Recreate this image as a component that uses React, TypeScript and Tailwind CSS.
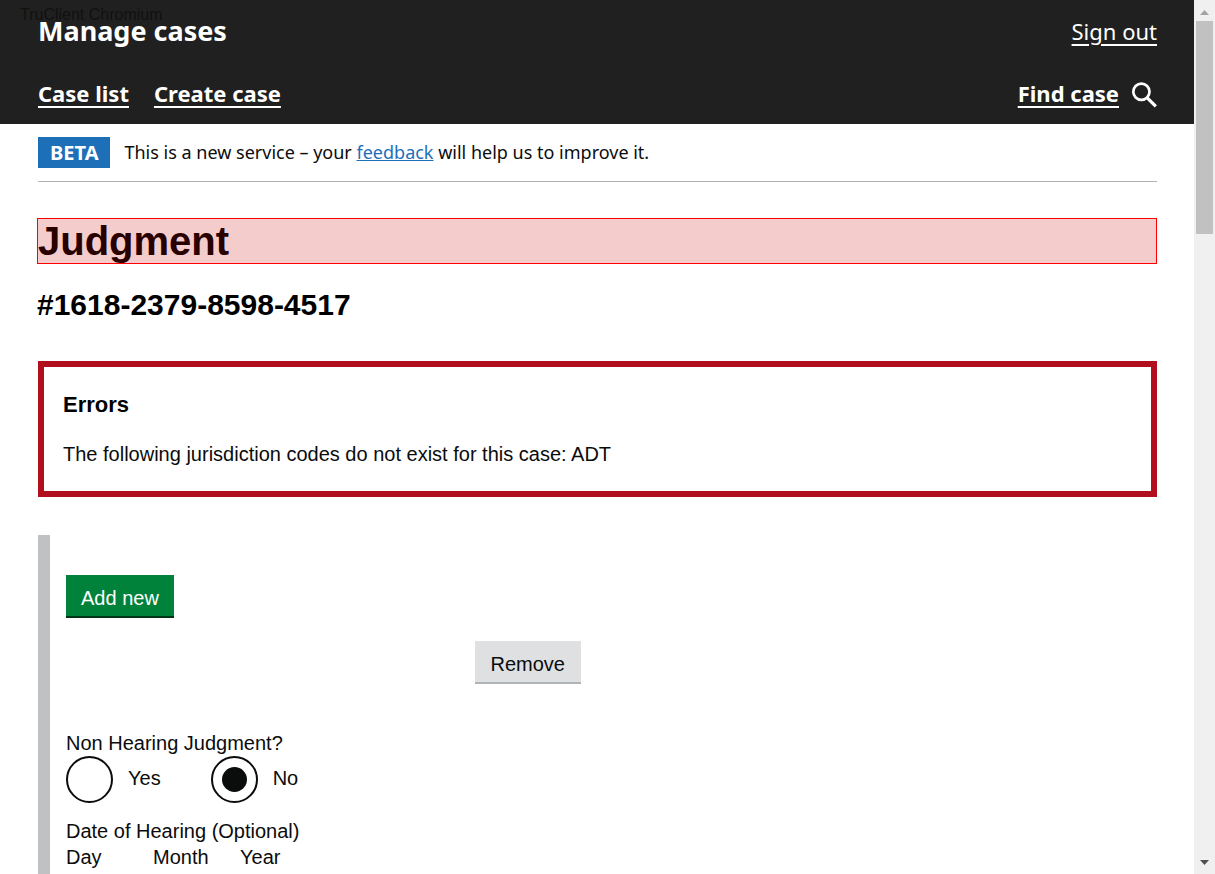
import React from 'react';

function SearchIcon() {
  return (
    <svg viewBox="0 0 26 26" className="h-[26px] w-[26px]" fill="none" stroke="white" strokeWidth="2.7" aria-hidden="true">
      <circle cx="10.4" cy="9.8" r="8.1" />
      <path d="M16 15.6 L24.8 24.4" strokeWidth="3.2" />
    </svg>
  );
}

function Header() {
  return (
    <header className="bg-[#202020] pr-[37px] pl-[38px] font-['Noto_Sans',sans-serif] text-[22px] text-white">
      <div className="flex h-[62px] items-center justify-between">
        <div className="text-[27px] leading-8 font-bold">Manage cases</div>
        <a href="#sign-out" className="underline decoration-2 underline-offset-4">Sign out</a>
      </div>
      <nav className="flex h-[62px] items-start justify-between font-bold">
        <div className="flex gap-[25px] pt-4 leading-[30px]">
          <a href="#cases" className="underline decoration-2 underline-offset-4">Case list</a>
          <a href="#create" className="underline decoration-2 underline-offset-4">Create case</a>
        </div>
        <div className="flex gap-3 pt-4 leading-[30px]">
          <a href="#find" className="underline decoration-2 underline-offset-4">Find case</a>
          <div className="pt-1">
            <SearchIcon />
          </div>
        </div>
      </nav>
    </header>
  );
}

function Radio({ label, checked }: { label: string; checked?: boolean }) {
  return (
    <label className="flex items-center gap-[15px]">
      <input
        type="radio"
        name="nonHearing"
        defaultChecked={checked}
        className="grid h-[47px] w-[47px] appearance-none place-items-center rounded-full border-2 border-[#0b0c0c] before:h-[25px] before:w-[25px] before:rounded-full checked:before:bg-[#0b0c0c]"
      />
      <span className="pb-1">{label}</span>
    </label>
  );
}

function DateField({ label, id, size }: { label: string; id: string; size: string }) {
  return (
    <div className="flex flex-col gap-2">
      <label htmlFor={id}>{label}</label>
      <input id={id} className={`h-12 border-2 border-[#0b0c0c] px-2 ${size}`} />
    </div>
  );
}

function ScrollRail() {
  return (
    <div className="flex w-[21px] shrink-0 flex-col items-center bg-[#f0f0f0]" aria-hidden="true">
      <div className="flex h-[21px] shrink-0 items-center justify-center pt-1">
        <svg viewBox="0 0 9 5" className="h-[5px] w-[9px]" fill="#a3a3a3"><path d="M4.5 0 L9 5 H0 Z" /></svg>
      </div>
      <div className="h-[213px] w-[17px] bg-[#c1c1c1]" />
      <div className="mt-auto flex h-6 shrink-0 items-center justify-center">
        <svg viewBox="0 0 9 5" className="h-[5px] w-[9px]" fill="#505050"><path d="M4.5 5 L9 0 H0 Z" /></svg>
      </div>
    </div>
  );
}

export default function App() {
  return (
    <div className="relative flex h-screen overflow-hidden bg-white font-['Liberation_Sans',Arial,sans-serif] text-xl leading-[26px] text-[#0b0c0c]">
      <div className="absolute top-1 left-5 text-base leading-[22px] text-[#111111]">TruClient Chromium</div>
      <div className="min-w-0 flex-1 overflow-hidden">
        <Header />
        <div className="pr-[37px] pl-[38px]">
          <div className="flex items-center gap-[14px] border-b border-[#b1b4b6] py-[13px] font-['Noto_Sans',sans-serif] text-lg leading-[31px]">
            <strong className="bg-[#1d70b8] px-3 text-xl leading-[31px] text-white">BETA</strong>
            <span>
              This is a new service – your{' '}
              <a href="#feedback" className="text-[#1d70b8] underline">feedback</a> will help us to improve it.
            </span>
          </div>
          <main>
            <h1 className="-ml-px mt-9 border border-[#ff0000] bg-[#f4cccc] text-[40px] leading-[44px] font-bold text-[#280000]">
              Judgment
            </h1>
            <h2 className="-ml-px mt-6 text-[30px] leading-[34px] font-bold text-black">#1618-2379-8598-4517</h2>
            <section className="mt-[39px] border-6 border-[#b10e1e] px-[19px] py-6">
              <h3 className="text-[22px] leading-7 font-bold text-black">Errors</h3>
              <p className="mt-[22px]">The following jurisdiction codes do not exist for this case: ADT</p>
            </section>
            <form className="mt-[38px] border-l-12 border-[#bfc1c3] pt-10 pl-4">
              <button type="button" className="block h-[43px] border-b-2 border-[#003618] bg-[#00823b] px-[15px] pt-1 text-white">
                Add new
              </button>
              <div className="mt-[23px] flex w-[515px] justify-end">
                <button type="button" className="h-[43px] border-b-2 border-[#b1b4b6] bg-[#dee0e2] px-4 pt-1">Remove</button>
              </div>
              <fieldset className="mt-[46px]">
                <legend>Non Hearing Judgment?</legend>
                <div className="flex gap-[50px]">
                  <Radio label="Yes" />
                  <Radio label="No" checked />
                </div>
              </fieldset>
              <fieldset className="mt-[15px]">
                <legend>Date of Hearing (Optional)</legend>
                <div className="flex gap-[25px]">
                  <DateField label="Day" id="day" size="w-[62px]" />
                  <DateField label="Month" id="month" size="w-[62px]" />
                  <DateField label="Year" id="year" size="w-[90px]" />
                </div>
              </fieldset>
            </form>
          </main>
        </div>
      </div>
      <ScrollRail />
    </div>
  );
}
